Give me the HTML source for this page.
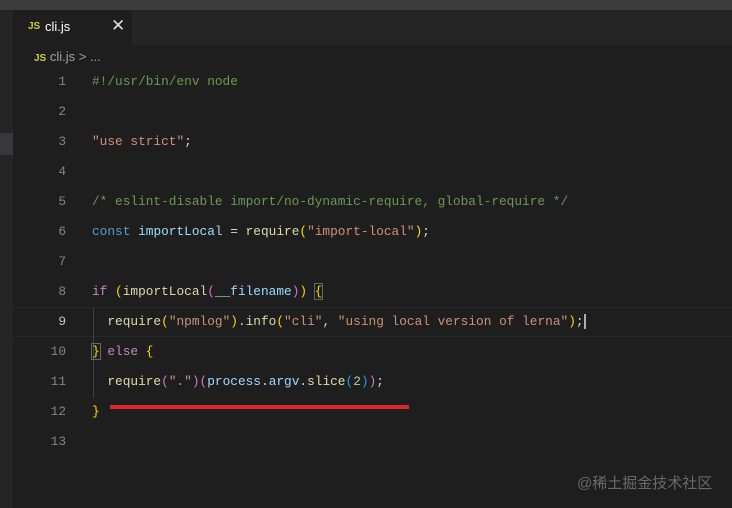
<!DOCTYPE html>
<html><head><meta charset="utf-8"><style>
body{margin:0;width:732px;height:508px;background:#1e1e1e;overflow:hidden;position:relative;font-family:"Liberation Sans",sans-serif}
.t{position:absolute;left:0;top:0;width:732px;height:10px;background:#3c3c3c}
.tabs{position:absolute;left:0;top:10px;width:732px;height:35px;background:#252526}
.tab{position:absolute;left:13px;top:0;width:119px;height:35px;background:#1e1e1e;color:#fff;font-size:13px}
.js{color:#cbcb41;font-weight:bold;font-size:10px}
.side{position:absolute;left:0;top:45px;width:13px;height:463px;background:#252526}
.code{position:absolute;left:0;top:67px;width:732px;font-family:"Liberation Mono",monospace;font-size:12.8px}
.l{height:30px;line-height:30px;position:relative}
.n{position:absolute;left:0;width:66px;text-align:right;color:#858585}
.c{position:absolute;left:92px;color:#d4d4d4;white-space:pre}
.cm{color:#6a9955}.s{color:#ce9178}.k{color:#569cd6}.v{color:#9cdcfe}.f{color:#dcdcaa}.y{color:#ffd700}.p{color:#da70d6}.b{color:#179fff}.kw{color:#c586c0}.nm{color:#b5cea8}
</style></head><body>
<div class="t"></div>
<div class="tabs"><div class="tab"><span class="js" style="position:absolute;left:15px;top:11px">JS</span><span style="position:absolute;left:32px;top:9px">cli.js</span><span style="position:absolute;left:98px;top:6px;font-size:17px;color:#ddd">✕</span></div></div>
<div class="side"><div style="position:absolute;top:88px;width:13px;height:22px;background:#37373d"></div></div>
<div style="position:absolute;left:34px;top:49px;font-size:13px;color:#a0a0a0"><span class="js">JS</span> cli.js &gt; ...</div>
<div style="position:absolute;left:13px;top:307px;width:719px;height:30px;box-sizing:border-box;border-top:1px solid #282828;border-bottom:1px solid #282828"></div>
<div style="position:absolute;left:93px;top:308px;width:1px;height:90px;background:#404040"></div>
<div class="code"><div class="l"><span class="n">1</span><span class="c cm">#!/usr/bin/env node</span></div><div class="l"><span class="n">2</span></div><div class="l"><span class="n">3</span><span class="c"><span class="s">"use strict"</span>;</span></div><div class="l"><span class="n">4</span></div><div class="l"><span class="n">5</span><span class="c cm">/* eslint-disable import/no-dynamic-require, global-require */</span></div><div class="l"><span class="n">6</span><span class="c"><span class="k">const</span> <span class="v">importLocal</span> = <span class="f">require</span><span class="y">(</span><span class="s">"import-local"</span><span class="y">)</span>;</span></div><div class="l"><span class="n">7</span></div><div class="l"><span class="n">8</span><span class="c"><span class="kw">if</span> <span class="y">(</span><span class="f">importLocal</span><span class="p">(</span><span class="v">__filename</span><span class="p">)</span><span class="y">)</span> <span class="y" style="outline:1px solid #666">{</span></span></div><div class="l"><span class="n" style="color:#c6c6c6">9</span><span class="c">  <span class="f">require</span><span class="y">(</span><span class="s">"npmlog"</span><span class="y">)</span>.<span class="f">info</span><span class="y">(</span><span class="s">"cli"</span>, <span class="s">"using local version of lerna"</span><span class="y">)</span>;<span style="border-left:2px solid #aeafad"></span></span></div><div class="l"><span class="n">10</span><span class="c"><span class="y" style="outline:1px solid #666">}</span> <span class="kw">else</span> <span class="y">{</span></span></div><div class="l"><span class="n">11</span><span class="c">  <span class="f">require</span><span class="p">(</span><span class="s">"."</span><span class="p">)</span><span class="p">(</span><span class="v">process</span>.<span class="v">argv</span>.<span class="f">slice</span><span class="b">(</span><span class="nm">2</span><span class="b">)</span><span class="p">)</span>;</span></div><div class="l"><span class="n">12</span><span class="c y">}</span></div><div class="l"><span class="n">13</span></div></div>
<div style="position:absolute;left:110px;top:405px;width:299px;height:4px;background:#e0242e"></div>
<div style="position:absolute;left:577px;top:472px;font-family:'Liberation Sans','Noto Sans CJK SC',sans-serif;font-size:15px;color:#6a6a6a">@稀土掘金技术社区</div>
</body></html>
